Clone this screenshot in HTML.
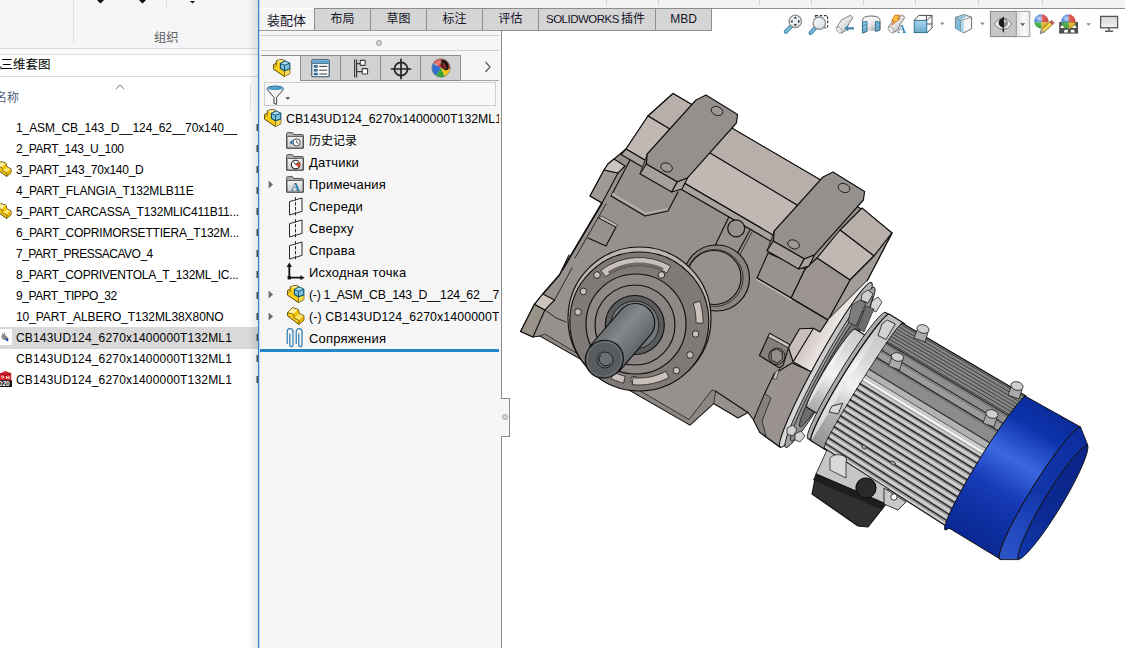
<!DOCTYPE html>
<html><head><meta charset="utf-8"><title>SOLIDWORKS</title>
<style>
html,body{margin:0;padding:0}
body{width:1125px;height:648px;position:relative;overflow:hidden;background:#fff;font-family:"Liberation Sans",sans-serif;color:#000}
.abs{position:absolute}
.cj{display:block;position:relative;overflow:visible}
.cj .ct{position:absolute;left:0;top:0;white-space:nowrap;font-family:"Liberation Sans","Noto Sans CJK SC",sans-serif}
/* explorer */
#exp{left:0;top:0;width:258px;height:648px;background:#fff;overflow:hidden}
#rib{left:0;top:0;width:258px;height:48px;background:#f5f6f7;border-bottom:1px solid #dadbdc}
#ribgap{left:0;top:49px;width:258px;height:5px;background:#f9f9f9}
#addr{left:0;top:54px;width:258px;height:21px;background:#fff;border-top:1px solid #d9d9d9;border-bottom:1px solid #d9d9d9}
.vsep{width:1px;background:#e2e3e4}
.row{left:16px;height:21px;line-height:21px;font-size:12px;white-space:nowrap;color:#000}
.sel{left:0;top:327px;width:258px;height:22px;background:#d9d9d9}
/* solidworks */
#sw{left:258px;top:0;width:867px;height:648px;background:#fff}
.tab{top:8px;height:22px;border:1px solid #8e8e8e;background:#d5d5d5;box-sizing:border-box;height:23px;font-size:12px;line-height:21px;text-align:center;color:#141428;white-space:nowrap}
.fmtab{top:55px;width:41px;height:26px;box-sizing:border-box;border:1px solid #8e8e8e;background:#d2d2d2}
.trow{height:22px;line-height:22px;font-size:13px;white-space:nowrap;color:#000}
</style></head><body>

<!-- ================= Explorer (left) ================= -->
<div id="exp" class="abs">
  <div id="rib" class="abs"></div>
  <div id="ribgap" class="abs"></div>
  <div id="addr" class="abs"></div>
  <div class="abs vsep" style="left:73px;top:0;height:45px"></div>
  <div class="abs vsep" style="left:166px;top:0;height:10px"></div>
  <svg class="abs" style="left:0;top:0" width="258" height="12">
    <path d="M97 0h7l-3.5 3.5zM139 0h7l-3.5 3.500zM190 1h5l-2.500 2.500z" fill="#111"/>
  </svg>
  <div class="abs" style="left:154.0px;top:30.6px"><span class="cj" style="width:24.6px;height:14.3px;"><span class="ct" style="font-size:12.3px;line-height:14.3px;color:#5e5e5e">组织</span></span></div>
  <div class="abs" style="left:-1px;top:56px;font-size:12.5px;line-height:17px;color:#000">,</div><div class="abs" style="left:0.5px;top:57.6px"><span class="cj" style="width:50.0px;height:14.5px;"><span class="ct" style="font-size:12.5px;line-height:14.5px;color:#000">三维套图</span></span></div>
  <svg class="abs" style="left:115px;top:83px" width="10" height="7"><path d="M1 6l4-4.200L9 6" fill="none" stroke="#7a7a7a" stroke-width="1"/></svg>
  <div class="abs" style="left:-5.0px;top:91.6px"><span class="cj" style="width:24.0px;height:13.9px;"><span class="ct" style="font-size:12.0px;line-height:13.9px;color:#4c607a">名称</span></span></div>
  <div class="abs vsep" style="left:250px;top:84px;height:27px;background:#e5e5e5"></div>
  <div class="abs sel"></div>
  <svg class="abs" style="left:-4px;top:161px" width="16" height="16" viewBox="0 0 18 18"><use href="#icPart2"/></svg>
  <svg class="abs" style="left:-4px;top:203px" width="16" height="16" viewBox="0 0 18 18"><use href="#icPart2"/></svg>
  <svg width="0" height="0" style="position:absolute"><defs><symbol id="icPart2" viewBox="0 0 18 18">
    <path d="M.6 5.600L5.600.6l5.600 1.900 1.300 4.400 4.400 1.900v4.300l-5 4.400L.6 8.800z" fill="#fdd017" stroke="#5a4300" stroke-width="1.100" stroke-linejoin="round"/>
    <path d="M1 5.600L5.700 1l5.100 1.700-4.500 4.500z" fill="#fff0a0"/>
    <path d="M6.300 7.200l4.500-4.500L12.100 7l-4.700 4.200z" fill="#f2c200"/>
    <path d="M7.400 11.200L12.100 7l4.400 2-4.600 4.200z" fill="#ffe870"/>
    <path d="M11.900 13.200L16.500 9v3.900l-4.600 4.200z" fill="#e5b400"/>
    <path d="M1 5.700l5.300 1.500 1.100 4 4.500 2V17" fill="none" stroke="#5a4300" stroke-width=".8"/>
  </symbol></defs></svg>
  <div class="abs" style="left:0;top:329px;width:12px;height:16px;background:#fff"></div>
  <svg class="abs" style="left:0;top:329px" width="12" height="16"><path d="M1 8l2-3 3 1.400 2.600 3.200-2.400 1.800L3 10.600z" fill="#8b8b8b"/><path d="M2.400 4.400l.8 2M4.600 3.400l.2 2.400" stroke="#555" stroke-width=".7"/><path d="M6.400 9l2.200 1.400-.8 2-2.200-1.600z" fill="#1a3cc0"/></svg>
  <svg class="abs" style="left:0;top:370px" width="13" height="18"><path d="M0 3.600L5.400 1l5.800 2.200v7.200H0z" fill="#d4202a"/><path d="M0 3.600l5.400 1.600 5.800-2" fill="none" stroke="#8a0d14" stroke-width=".8"/><path d="M1.200 6.600q1.600-1.400 2.600 0t-2.200 1.600M6.600 6v2.600l1.200-1.400 1.200 1.400V6" fill="none" stroke="#fff" stroke-width=".9"/><rect x="0" y="10.200" width="12" height="6.800" fill="#111"/><text x="-1.200" y="16.200" font-family="Liberation Sans" font-weight="bold" font-size="6.800" fill="#fff" letter-spacing="-.2">020</text></svg>
  <!-- next column slivers -->
  <svg class="abs" style="left:254px;top:117px" width="4" height="270"><g fill="#555"><rect x="2.5" y="7" width="1.5" height="7"/><rect x="2.5" y="28" width="1.5" height="7"/><rect x="2.5" y="49" width="1.5" height="7"/><rect x="2.5" y="70" width="1.5" height="7"/><rect x="2.5" y="91" width="1.5" height="7"/><rect x="2.5" y="112" width="1.5" height="7"/><rect x="2.5" y="133" width="1.5" height="7"/><rect x="2.5" y="154" width="1.5" height="7"/><rect x="2.5" y="175" width="1.5" height="7"/><rect x="2.5" y="196" width="1.5" height="7"/><rect x="2.5" y="217" width="1.5" height="7"/><rect x="2.5" y="238" width="1.5" height="7"/><rect x="2.5" y="259" width="1.5" height="7"/></g></svg>

  <div class="abs row" style="top:118px;letter-spacing:-0.100px">1_ASM_CB_143_D__124_62__70x140__</div>
  <div class="abs row" style="top:139px;letter-spacing:-0.337px">2_PART_143_U_100</div>
  <div class="abs row" style="top:160px;letter-spacing:-0.254px">3_PART_143_70x140_D</div>
  <div class="abs row" style="top:181px;letter-spacing:-0.158px">4_PART_FLANGIA_T132MLB11E</div>
  <div class="abs row" style="top:202px;letter-spacing:-0.189px">5_PART_CARCASSA_T132MLIC411B11...</div>
  <div class="abs row" style="top:223px;letter-spacing:-0.207px">6_PART_COPRIMORSETTIERA_T132M...</div>
  <div class="abs row" style="top:244px;letter-spacing:-0.488px">7_PART_PRESSACAVO_4</div>
  <div class="abs row" style="top:265px;letter-spacing:-0.254px">8_PART_COPRIVENTOLA_T_132ML_IC...</div>
  <div class="abs row" style="top:286px;letter-spacing:-0.417px">9_PART_TIPPO_32</div>
  <div class="abs row" style="top:307px;letter-spacing:-0.074px">10_PART_ALBERO_T132ML38X80NO</div>
  <div class="abs row" style="top:328px;letter-spacing:0.172px">CB143UD124_6270x1400000T132ML1</div>
  <div class="abs row" style="top:349px;letter-spacing:0.172px">CB143UD124_6270x1400000T132ML1</div>
  <div class="abs row" style="top:370px;letter-spacing:0.172px">CB143UD124_6270x1400000T132ML1</div>
</div>

<!-- ================= SolidWorks ================= -->
<div id="sw" class="abs">
  <!-- top strip of command manager -->
  <div class="abs" style="left:0;top:0;width:867px;height:8px;background:#f4f4f4"></div>
  <div class="abs" style="left:57px;top:8px;width:810px;height:1px;background:#8e8e8e"></div>
  <div class="abs" style="left:348px;top:0;width:1px;height:5px;background:#cfcfcf"></div>
  <div class="abs" style="left:400px;top:0;width:1px;height:5px;background:#cfcfcf"></div>
  <div class="abs" style="left:501px;top:0;width:1px;height:5px;background:#cfcfcf"></div>
  <div class="abs" style="left:553px;top:0;width:1px;height:5px;background:#cfcfcf"></div>
  <div class="abs" style="left:605px;top:0;width:1px;height:5px;background:#cfcfcf"></div>
  <div class="abs" style="left:657px;top:0;width:1px;height:5px;background:#cfcfcf"></div>
  <div class="abs" style="left:720px;top:0;width:1px;height:5px;background:#cfcfcf"></div>
  <div class="abs" style="left:784px;top:0;width:1px;height:5px;background:#cfcfcf"></div>
  <!-- tabs -->
  <div class="abs" style="left:1px;top:9px;width:56px;height:22px;background:#f4f4f4"></div><div class="abs" style="left:9.0px;top:12.6px"><span class="cj" style="width:39.0px;height:15.1px;"><span class="ct" style="font-size:13.0px;line-height:15.1px;color:#141428">装配体</span></span></div>
  <div class="abs tab" style="left:56px;width:57px"></div><div class="abs" style="left:72.5px;top:13.1px"><span class="cj" style="width:24.0px;height:13.9px;"><span class="ct" style="font-size:12.0px;line-height:13.9px;color:#141428">布局</span></span></div>
  <div class="abs tab" style="left:112px;width:57px"></div><div class="abs" style="left:128.5px;top:13.1px"><span class="cj" style="width:24.0px;height:13.9px;"><span class="ct" style="font-size:12.0px;line-height:13.9px;color:#141428">草图</span></span></div>
  <div class="abs tab" style="left:168px;width:57px"></div><div class="abs" style="left:184.5px;top:13.1px"><span class="cj" style="width:24.0px;height:13.9px;"><span class="ct" style="font-size:12.0px;line-height:13.9px;color:#141428">标注</span></span></div>
  <div class="abs tab" style="left:224px;width:57px"></div><div class="abs" style="left:240.5px;top:13.1px"><span class="cj" style="width:24.0px;height:13.9px;"><span class="ct" style="font-size:12.0px;line-height:13.9px;color:#141428">评估</span></span></div>
  <div class="abs tab" style="left:280px;width:118px;text-align:left;padding-left:7px;font-size:11.5px;letter-spacing:-0.5px">SOLIDWORKS </div><div class="abs" style="left:363.0px;top:13.1px"><span class="cj" style="width:24.0px;height:13.9px;"><span class="ct" style="font-size:12.0px;line-height:13.9px;color:#141428">插件</span></span></div>
  <div class="abs tab" style="left:397px;width:57px">MBD</div>
  <!-- feature manager panel -->
  <div class="abs" id="fm" style="left:1px;top:31px;width:242px;height:617px;background:#f6f6f6"></div>
  <div class="abs" style="left:1px;top:30px;width:243px;height:1px;background:#9a9a9a"></div>
  <div class="abs" style="left:243px;top:30px;width:1px;height:618px;background:#8a8a8a"></div>
  <div class="abs" style="left:3px;top:35px;width:238px;height:1px;background:#d0d0d0"></div>
  <div class="abs" style="left:3px;top:50px;width:238px;height:1px;background:#d0d0d0"></div>
  <div class="abs" style="left:118px;top:40px;width:6px;height:6px;border-radius:50%;background:#d4d4d4;border:1px solid #a0a0a0;box-sizing:border-box"></div>
  <!-- fm tabs -->
  <div class="abs" style="left:42px;top:80px;width:199px;height:1px;background:#a8a8a8"></div>
  <div class="abs" style="left:3px;top:55px;width:40px;height:1px;background:#8e8e8e"></div>
  <div class="abs fmtab" style="left:42px"></div>
  <div class="abs fmtab" style="left:82px"></div>
  <div class="abs fmtab" style="left:122px"></div>
  <div class="abs fmtab" style="left:162px"></div>
  <svg class="abs" style="left:226px;top:61px" width="8" height="12"><path d="M1.500 1l4.500 5-4.500 5" fill="none" stroke="#666" stroke-width="1.4"/></svg>
  <!-- filter box -->
  <div class="abs" style="left:6px;top:82px;width:232px;height:24px;box-sizing:border-box;border:1px solid #cfcfcf;background:#f8f8f8"></div>
  <!-- rollback bar -->
  <div class="abs" style="left:2px;top:349px;width:239px;height:3px;background:#2586c8"></div>
  <!-- splitter handle -->
  <div class="abs" style="left:243px;top:398px;width:9px;height:39px;box-sizing:border-box;border:1px solid #8a8a8a;border-left:none;background:#f6f6f6"></div>
  <div class="abs" style="left:244px;top:414px;width:6px;height:6px;border-radius:50%;background:#d4d4d4;border:1px solid #aaa;box-sizing:border-box"></div>
  <svg width="0" height="0" style="position:absolute"><defs>
  <linearGradient id="gFold" x1="0" y1="0" x2="0" y2="1"><stop offset="0" stop-color="#f4f4f4"/><stop offset="1" stop-color="#c9c9c9"/></linearGradient>
  <symbol id="icPart" viewBox="0 0 18 18">
    <path d="M.6 5.600L5.600.6l5.600 1.900 1.300 4.400 4.400 1.900v4.300l-5 4.400L.6 8.800z" fill="#fdd017" stroke="#5a4300" stroke-width="1" stroke-linejoin="round"/>
    <path d="M1 5.600L5.700 1l5.100 1.700-4.500 4.500z" fill="#fff0a0"/>
    <path d="M6.300 7.200l4.500-4.500L12.100 7l-4.700 4.200z" fill="#f2c200"/>
    <path d="M7.400 11.200L12.100 7l4.400 2-4.600 4.200z" fill="#ffe870"/>
    <path d="M11.900 13.200L16.500 9v3.900l-4.600 4.200z" fill="#e5b400"/>
    <path d="M1 5.700l5.300 1.500 1.100 4 4.500 2V17" fill="none" stroke="#5a4300" stroke-width=".7"/>
  </symbol>
  <symbol id="icAsm" viewBox="0 0 18 18">
    <path d="M.4 5.600l2.700-1.100.4-2.800L8.200.4l3.100.9 5.500 8.600v4.700l-5.500 2.900L.4 10z" fill="#fdd017" stroke="#5a4300" stroke-width="1" stroke-linejoin="round"/>
    <path d="M3.700 1.900L8.200.7l2.800.8-3.600 1.900z" fill="#fff0a0"/>
    <path d="M11.500 11.900l5.100-1.800v4.400l-5.100 2.700z" fill="#f5dc55"/>
    <path d="M11.400 11.800v5.500" stroke="#5a4300" stroke-width=".7"/>
    <path d="M.6 5.700l2.500-1 .4 2-2.300.8" fill="#ffe35a" stroke="#5a4300" stroke-width=".6"/>
    <path d="M7.400 4.600l4.700-2.500 4.700 2.100v5.700l-5.300 1.800-4.100-2.200z" fill="#7ec0e0" stroke="#0f4c6e" stroke-width="1.100" stroke-linejoin="round"/>
    <path d="M7.700 4.700l4.400-2.300 4.300 1.900-4.900 1.900z" fill="#a6dcf2"/>
    <path d="M11.500 6.200v5.400M7.500 4.700l4 1.500 5.200-1.900" fill="none" stroke="#0f4c6e" stroke-width=".9"/>
  </symbol>
  <symbol id="icFolder" viewBox="0 0 18 17">
    <path d="M.6 16.200V1.600q0-.9.9-.9h4.600q.7 0 1 .6l.7 1.300h8.600q1 0 1 1v12.600z" fill="#b9b9b9" stroke="#4a4a4a" stroke-width="1" stroke-linejoin="round"/>
    <path d="M1 16V5.200q0-.8.8-.8h14.400q.8 0 .8.8V16z" fill="url(#gFold)" stroke="#4a4a4a" stroke-width=".9"/>
  </symbol>
  <symbol id="icPlane" viewBox="0 0 18 22">
    <path d="M3.500 6.600L16 3v13.400L3.500 20z" fill="none" stroke="#2b2b2b" stroke-width="1"/>
    <path d="M9.500 2.200v19" stroke="#2b2b2b" stroke-width="1" stroke-dasharray="3.4 1.5"/>
  </symbol>
</defs></svg>
<!-- rows -->
<svg class="abs" style="left:6px;top:109px" width="18" height="18"><use href="#icAsm"/></svg>
<div class="abs trow" style="left:28px;top:108px;width:213px;overflow:hidden;font-size:12.3px">CB143UD124_6270x1400000T132ML1</div>

<svg class="abs" style="left:28px;top:132px" width="18" height="17"><use href="#icFolder"/>
  <circle cx="10.6" cy="10.4" r="3.6" fill="#fff" stroke="#333" stroke-width=".9"/><path d="M10.600 8.400v2.200l1.800.8" fill="none" stroke="#333" stroke-width=".8"/>
  <path d="M3 9.600l2.200 3.200 2.600-2.600-1.600-.1q.4-1.600 2-2.400-2.600-.2-3.700 2.200z" fill="#2a78ad"/></svg>
<div class="abs" style="left:51.0px;top:134.600px"><span class="cj" style="width:48.0px;height:13.9px;"><span class="ct" style="font-size:12.0px;line-height:13.9px;color:#000">历史记录</span></span></div>

<svg class="abs" style="left:28px;top:154px" width="18" height="17"><use href="#icFolder"/>
  <circle cx="9.6" cy="10.6" r="4.3" fill="#fff" stroke="#222" stroke-width="1.1"/>
  <path d="M9.600 10.600L13 8.200a4.300 4.300 0 0 1-.4 5.400z" fill="#e2431e"/><path d="M9.600 10.600L7.400 7.600M9.600 10.600l2.600-2.400" stroke="#222" stroke-width=".9"/></svg>
<div class="abs trow" style="left:51px;top:152px;letter-spacing:0.2px">Датчики</div>

<svg class="abs" style="left:10px;top:180px" width="6" height="9"><path d="M.6.6L5 4.400.6 8.400z" fill="#6a6a6a"/></svg>
<svg class="abs" style="left:28px;top:176px" width="18" height="17"><use href="#icFolder"/>
  <text x="9.2" y="15" text-anchor="middle" font-family="Liberation Serif" font-weight="bold" font-size="12.5" fill="#2a78ad">A</text></svg>
<div class="abs trow" style="left:51px;top:174px;letter-spacing:0.2px">Примечания</div>

<svg class="abs" style="left:27.5px;top:195px" width="18" height="22"><use href="#icPlane"/></svg>
<div class="abs trow" style="left:51px;top:196px;letter-spacing:0.2px">Спереди</div>
<svg class="abs" style="left:27.5px;top:217px" width="18" height="22"><use href="#icPlane"/></svg>
<div class="abs trow" style="left:51px;top:218px;letter-spacing:0.2px">Сверху</div>
<svg class="abs" style="left:27.5px;top:239px" width="18" height="22"><use href="#icPlane"/></svg>
<div class="abs trow" style="left:51px;top:240px;letter-spacing:0.2px">Справа</div>

<svg class="abs" style="left:28px;top:262px" width="20" height="18"><path d="M3.300 16V3.400M3 15.700h13" stroke="#111" stroke-width="1.8" fill="none"/><path d="M.6 5L3.300.6 6 5zM14.400 13.200l4.200 2.500-4.200 2.500z" fill="#111"/><rect x="1.6" y="14" width="3.4" height="3.4" fill="#111"/></svg>
<div class="abs trow" style="left:51px;top:262px;letter-spacing:0.2px">Исходная точка</div>

<svg class="abs" style="left:10px;top:290px" width="6" height="9"><path d="M.6.6L5 4.400.6 8.400z" fill="#6a6a6a"/></svg>
<svg class="abs" style="left:29px;top:285px" width="18" height="18"><use href="#icAsm"/></svg>
<div class="abs trow" style="left:51px;top:284px;width:190px;overflow:hidden;font-size:12.3px;letter-spacing:-0.28px">(-) 1_ASM_CB_143_D__124_62__70x140__</div>

<svg class="abs" style="left:10px;top:312px" width="6" height="9"><path d="M.6.6L5 4.400.6 8.400z" fill="#6a6a6a"/></svg>
<svg class="abs" style="left:29px;top:307px" width="18" height="18"><use href="#icPart"/></svg>
<div class="abs trow" style="left:51px;top:306px;width:190px;overflow:hidden;font-size:12.3px;letter-spacing:0.12px">(-) CB143UD124_6270x1400000T132ML1</div>

<svg class="abs" style="left:28px;top:327px" width="18" height="22"><g fill="none" stroke="#2a78ad" stroke-width="1.2"><path d="M1.200 17V4.600a2.900 2.900 0 0 1 5.800 0V18a1.600 1.600 0 0 1-3.200 0V6.400"/><path d="M10.200 17V4.600a2.900 2.900 0 0 1 5.800 0V18a1.600 1.600 0 0 1-3.200 0V6.400"/></g></svg>
<div class="abs trow" style="left:51px;top:328px;letter-spacing:0.2px">Сопряжения</div>

<!-- FM tab icons -->
<svg class="abs" style="left:15px;top:59px" width="18" height="18"><use href="#icAsm"/></svg>
<svg class="abs" style="left:53px;top:59px" width="20" height="19"><rect x=".8" y=".8" width="17.4" height="17" rx="1.4" fill="#fff" stroke="#2b4a66" stroke-width="1.1"/><rect x="1.3" y="1.3" width="16.4" height="3" fill="#5ea6cf"/><path d="M1.300 4.600h16.400" stroke="#2b4a66" stroke-width=".8"/><g fill="#2a78ad" stroke="#1d4d70" stroke-width=".5"><rect x="3" y="6.4" width="3.6" height="2"/><rect x="3" y="10.2" width="3.6" height="2"/><rect x="3" y="14" width="3.6" height="2"/></g><path d="M8.200 7.400h8M8.200 11.200h8M8.200 15h8" stroke="#333" stroke-width="1"/></svg>
<svg class="abs" style="left:95px;top:59px" width="16" height="19"><g fill="none" stroke="#3a3a3a" stroke-width="1.2"><path d="M1.600.6v17.800M3.600.6v17.800M3.600 4.600h4M3.600 12.600h5.600"/></g><rect x="7.2" y="1.4" width="5" height="5" rx=".8" fill="#fff" stroke="#3a3a3a" stroke-width="1.1"/><rect x="9.2" y="9.6" width="5.4" height="5.4" rx=".8" fill="#fff" stroke="#3a3a3a" stroke-width="1.1"/></svg>
<svg class="abs" style="left:132px;top:58px" width="22" height="22"><circle cx="11" cy="11" r="6.6" fill="none" stroke="#222" stroke-width="1.7"/><path d="M11 .8v20.400M.8 11h20.400" stroke="#222" stroke-width="1.7"/></svg>
<svg class="abs" style="left:172px;top:57px" width="22" height="22"><defs><clipPath id="cpBall"><circle cx="11" cy="11" r="9.2"/></clipPath></defs><g clip-path="url(#cpBall)"><rect width="22" height="22" fill="#e8e8e8"/><path d="M11 11L0 4V0h11z" fill="#d9322a"/><path d="M11 11L0 4v18h4z" fill="#2f6fd0"/><path d="M11 11L4 22h12z" fill="#3aa533"/><path d="M11 11l5 11h6V12z" fill="#f0c419"/><path d="M11 11l11 1V0H11z" fill="#d9322a"/><ellipse cx="14.6" cy="8" rx="3.6" ry="5.6" transform="rotate(-28 14.6 8)" fill="#161616"/><ellipse cx="14.2" cy="8.8" rx="1.8" ry="3.6" transform="rotate(-28 14.2 8.8)" fill="#7a2c26"/></g><circle cx="11" cy="11" r="9.2" fill="none" stroke="#777" stroke-width=".7"/><ellipse cx="8" cy="6" rx="4" ry="2.4" transform="rotate(-30 8 6)" fill="#fff" opacity=".35"/></svg>
<!-- filter funnel -->
<svg class="abs" style="left:8px;top:85px" width="26" height="20"><ellipse cx="9.2" cy="3.6" rx="8.2" ry="2.6" fill="#8ec9e6" stroke="#1d5f85" stroke-width="1"/><path d="M1.200 4.600L8 12.400v6l2.600 1v-7l6.800-7.800" fill="#f2f2f2" stroke="#444" stroke-width="1" stroke-linejoin="round"/><ellipse cx="9.2" cy="3.2" rx="7.2" ry="1.7" fill="#4d9dc8"/><path d="M19.400 12.200h4.800l-2.400 2.600z" fill="#444"/></svg>

  <svg class="abs" style="left:522px;top:9px" width="345" height="31" viewBox="780 9 345 31">
<defs>
  <linearGradient id="tLens" x1="0" y1="0" x2="1" y2="1"><stop offset="0" stop-color="#fafcfd"/><stop offset="1" stop-color="#d4dde2"/></linearGradient>
  <linearGradient id="tTube" x1="0" y1="0" x2="1" y2="1"><stop offset="0" stop-color="#fdfdfd"/><stop offset=".5" stop-color="#e2e2e2"/><stop offset="1" stop-color="#9c9c9c"/></linearGradient>
  <linearGradient id="tBlueV" x1="0" y1="0" x2="0" y2="1"><stop offset="0" stop-color="#a9d6ec"/><stop offset="1" stop-color="#6aa9cb"/></linearGradient>
  <linearGradient id="tDrop" x1="0" y1="0" x2="1" y2="0"><stop offset="0" stop-color="#e2e2e2"/><stop offset=".6" stop-color="#fbfbfb"/><stop offset="1" stop-color="#e6e6e6"/></linearGradient>
  <linearGradient id="tMon" x1="0" y1="0" x2="0" y2="1"><stop offset="0" stop-color="#d6d6d6"/><stop offset="1" stop-color="#f1f1f1"/></linearGradient>
  <radialGradient id="tShine" cx=".35" cy=".3" r=".7"><stop offset="0" stop-color="#fff" stop-opacity=".75"/><stop offset=".35" stop-color="#fff" stop-opacity=".1"/><stop offset="1" stop-color="#000" stop-opacity=".12"/></radialGradient>
  <clipPath id="cpB1"><circle cx="1041.4" cy="21.5" r="7.2"/></clipPath>
  <clipPath id="cpB2"><circle cx="1068.4" cy="21.5" r="7.2"/></clipPath>
</defs>
<!-- 1 zoom to fit -->
<path d="M791.400 26.100l-5.600 5.700" stroke="#3f86ad" stroke-width="4.2" stroke-linecap="round"/>
<path d="M791.200 26.300l-5.200 5.300" stroke="#7db9d8" stroke-width="2.4" stroke-linecap="round"/>
<circle cx="795.3" cy="21.4" r="6.2" fill="url(#tLens)" stroke="#8f8f8f" stroke-width="1.3"/>
<path d="M795.300 16.600l1.700 2h-3.400zM795.300 26.200l1.700-2h-3.400zM790.500 21.400l2-1.700v3.400zM800.100 21.400l-2-1.700v3.400z" fill="#222"/>
<!-- 2 zoom area -->
<rect x="815.4" y="15.6" width="12.2" height="12.2" fill="none" stroke="#333" stroke-width="1.1" stroke-dasharray="2.6 1.7"/>
<path d="M815.600 27.600l-5 5.300" stroke="#3f86ad" stroke-width="4.2" stroke-linecap="round"/>
<path d="M815.400 27.800l-4.600 4.900" stroke="#7db9d8" stroke-width="2.4" stroke-linecap="round"/>
<circle cx="819.3" cy="23.2" r="6.2" fill="url(#tLens)" stroke="#8f8f8f" stroke-width="1.3"/>
<!-- 3 previous view -->
<path d="M836.600 27.200l4.600 6 5-3 1.200-4 5.600-8.600-2.400-2.400-9 4.600z" fill="url(#tTube)" stroke="#777" stroke-width=".9" stroke-linejoin="round"/>
<ellipse cx="839.2" cy="30" rx="2.2" ry="3.6" transform="rotate(-38 839.2 30)" fill="#eee" stroke="#888" stroke-width=".7"/>
<path d="M844.400 28.300l3.800-3.200v2.100h5.800v2.300h-5.800v2.100z" fill="#3f86ad"/>
<!-- 4 section view -->
<path d="M862.400 20.600q0-4.600 8.800-4.600t8.800 4.400v9.400l-4.200 1.400v-4.600h-8.600l-.2 4.800-4.600 1.600z" fill="#f4f4f4" stroke="#6a6a6a" stroke-width="1" stroke-linejoin="round"/>
<path d="M866.800 22.400q4.400-2 8.800-.2v8.600h-8.800z" fill="url(#tTube)"/>
<path d="M862.600 22.200l4.400-.8v10l-4.400 1.600z" fill="#8fc6e3" stroke="#2e6f94" stroke-width=".9"/>
<path d="M875.600 21.200l4.200 1v8l-4.200 1.200z" fill="#8fc6e3" stroke="#2e6f94" stroke-width=".9"/>
<path d="M863 27l3.600-3.600M863 30.600l3.800-3.800M863.600 32.800l3-3M876 25.400l3.400-3M876 28.800l3.600-3.400M876.400 31l3-2.800" stroke="#2e6f94" stroke-width=".8"/>
<!-- 5 dynamic annotation -->
<path d="M888.400 27l4.600 6 5-3 1.200-4 5.600-8.600-2.400-2.400-9 4.600z" fill="url(#tTube)" stroke="#777" stroke-width=".9" stroke-linejoin="round"/>
<ellipse cx="891" cy="29.8" rx="2.2" ry="3.6" transform="rotate(-38 891 29.8)" fill="#eee" stroke="#888" stroke-width=".7"/>
<path d="M895 15.200h4.800l-2.400 3.200h2.800l-8.400 6.600 2.600-4.200h-2.800z" fill="#f7c63a" stroke="#d0641c" stroke-width=".9" stroke-linejoin="round"/>
<text x="901.6" y="33.2" text-anchor="middle" font-family="Liberation Serif" font-size="12" fill="#3f86ad" font-weight="bold">A</text>
<!-- 6 view orientation -->
<path d="M918.800 15.400h13.200v12.600l-5 4.600M918.800 15.400l-4.600 5M932 15.400l-5 5M926.400 15.400v5M932 24h-5" fill="none" stroke="#4a4a4a" stroke-width="1"/>
<rect x="914.3" y="20.4" width="12.4" height="12.2" fill="url(#tBlueV)" stroke="#2e6f94" stroke-width="1"/>
<path d="M940 22.600h4.600l-2.300 2.600z" fill="#8a8a8a"/>
<!-- 7 display style -->
<path d="M955.400 17.400l8.600-2.800 7.600 2.600v11.600l-8 4-8.200-4.600z" fill="#f6f6f6" stroke="#6e6e6e" stroke-width="1" stroke-linejoin="round"/>
<path d="M955.800 17.800l4.600 2.600v11.400l-4.600-2.600z" fill="#7fbddc"/>
<path d="M960.400 20.400l3.400.6v11.600l-3.400-1z" fill="#a9d6ec"/>
<path d="M955.900 17.500l8.100-2.500 3 1-6.400 4.200z" fill="#8fc6e3"/>
<path d="M960.400 20.600v11M955.600 17.600l4.800 3 11-3.200" fill="none" stroke="#6e6e6e" stroke-width=".7"/>
<path d="M980 22.600h4.800l-2.400 2.600z" fill="#8a8a8a"/>
<!-- 8 hide/show (pressed) -->
<rect x="990.4" y="11.4" width="26" height="25.2" fill="#c6c6c6" stroke="#858585" stroke-width="1"/>
<rect x="1016.4" y="11.4" width="13.4" height="25.2" fill="url(#tDrop)" stroke="#a0a0a0" stroke-width="1"/>
<path d="M994.200 24q9-12.400 17.800 0-8.800 11.400-17.800 0z" fill="#ececec" stroke="#7a7a7a" stroke-width="1"/>
<circle cx="1003.3" cy="22.8" r="4.6" fill="#8a8a8a"/>
<path d="M1003.300 18.200a4.600 4.600 0 0 0 0 9.200z" fill="#1a1a1a"/>
<circle cx="1004.8" cy="21.4" r="1.3" fill="#cfcfcf"/>
<path d="M1003.300 16.800v15.400" stroke="#1a1a1a" stroke-width="1.2"/>
<path d="M1020.200 23.200h5l-2.500 2.700z" fill="#555"/>
<!-- 9 edit appearance -->
<g clip-path="url(#cpB1)"><rect x="1034" y="14" width="7.6" height="8.4" fill="#4a86d8"/><rect x="1041.6" y="14" width="8" height="8.4" fill="#de4f49"/><rect x="1034" y="22.4" width="7.6" height="8" fill="#43b443"/><rect x="1041.6" y="22.4" width="8" height="8" fill="#efc02f"/><circle cx="1041.4" cy="21.5" r="7.2" fill="url(#tShine)"/></g>
<path d="M1040.200 33.400l1.200-3.800 8.600-7.800 2.600 2.600-8.600 7.800z" fill="#f7d64a" stroke="#6a5a20" stroke-width=".8" stroke-linejoin="round"/>
<path d="M1050 21.800l1.600-1.400 2.600 2.600-1.600 1.400z" fill="#e0625c" stroke="#6a3030" stroke-width=".6"/>
<path d="M1040.200 33.400l1.200-3.800 2.600 2.600z" fill="#d8d8d8" stroke="#555" stroke-width=".6"/>
<!-- 10 apply scene -->
<rect x="1059.2" y="22" width="18.8" height="11.6" fill="#4e4e4e"/>
<path d="M1061.200 25.600h3.600l-.6 2.400h-3.800zM1072 25.600h3.600l.8 2.400h-3.800zM1064.600 29.800h3.400l-.2 2.800h-4zM1070.600 29.800h3.400l.8 2.800h-4z" fill="#fff"/>
<g clip-path="url(#cpB2)"><rect x="1061" y="14" width="7.6" height="8.4" fill="#4a86d8"/><rect x="1068.6" y="14" width="8" height="8.4" fill="#de4f49"/><rect x="1061" y="22.4" width="7.6" height="8" fill="#43b443"/><rect x="1068.6" y="22.4" width="8" height="8" fill="#efc02f"/><circle cx="1068.4" cy="21.5" r="7.2" fill="url(#tShine)"/></g>
<path d="M1086.200 23.200h4.600l-2.300 2.600z" fill="#8a8a8a"/>
<!-- 11 view settings -->
<rect x="1100.6" y="16.4" width="17" height="11.4" fill="url(#tMon)" stroke="#555" stroke-width="1.3"/>
<path d="M1109 28v2.600" stroke="#555" stroke-width="1.6"/><path d="M1105 31.200h8" stroke="#555" stroke-width="1.5"/>
</svg>

</div>
<svg class="abs" style="left:0;top:0" width="1125" height="648" viewBox="0 0 1125 648">
<defs>
<linearGradient id="gShaft" gradientUnits="userSpaceOnUse" x1="606" y1="327" x2="635" y2="352">
 <stop offset="0" stop-color="#6c7073"/><stop offset="0.4" stop-color="#83888b"/><stop offset="0.8" stop-color="#6f7376"/><stop offset="1" stop-color="#62666a"/></linearGradient>
<linearGradient id="gBlue" gradientUnits="userSpaceOnUse" x1="1053" y1="411" x2="975" y2="544">
 <stop offset="0" stop-color="#0a2c9c"/><stop offset="0.16" stop-color="#0d33ac"/><stop offset="0.40" stop-color="#3a67e0"/><stop offset="0.62" stop-color="#183cb8"/><stop offset="0.82" stop-color="#0d2fa1"/><stop offset="1" stop-color="#0b2994"/></linearGradient>
<linearGradient id="gBlueCh" gradientUnits="userSpaceOnUse" x1="1084" y1="436" x2="1010" y2="560">
 <stop offset="0" stop-color="#0d2d9e"/><stop offset="0.5" stop-color="#1236aa"/><stop offset="0.8" stop-color="#2349be"/><stop offset="1" stop-color="#2c53c6"/></linearGradient>
<linearGradient id="gBlueEnd" gradientUnits="userSpaceOnUse" x1="1088" y1="445" x2="1018" y2="560">
 <stop offset="0" stop-color="#0a2486"/><stop offset="0.6" stop-color="#0c2a92"/><stop offset="1" stop-color="#1237aa"/></linearGradient>
<linearGradient id="gFin" gradientUnits="userSpaceOnUse" x1="963" y1="359" x2="886" y2="487">
 <stop offset="0" stop-color="#7e7e7e"/><stop offset="0.30" stop-color="#9c9c9c"/><stop offset="0.42" stop-color="#b4b4b4"/><stop offset="0.50" stop-color="#d8d8d8"/><stop offset="0.62" stop-color="#c6c6c6"/><stop offset="1" stop-color="#bdbdbd"/></linearGradient>
<linearGradient id="gSilver" gradientUnits="userSpaceOnUse" x1="880" y1="300" x2="800" y2="440">
 <stop offset="0" stop-color="#b8b8b8"/><stop offset="0.35" stop-color="#d6d6d6"/><stop offset="0.55" stop-color="#f4f4f4"/><stop offset="0.75" stop-color="#b4b4b4"/><stop offset="1" stop-color="#8e8e8e"/></linearGradient>
<linearGradient id="gBand" gradientUnits="userSpaceOnUse" x1="871" y1="283" x2="780" y2="447">
 <stop offset="0" stop-color="#e0e0e0"/><stop offset="0.5" stop-color="#d4d4d4"/><stop offset="0.75" stop-color="#b0b0b0"/><stop offset="1" stop-color="#9a9a9a"/></linearGradient>
<linearGradient id="gAdapt" gradientUnits="userSpaceOnUse" x1="800" y1="340" x2="830" y2="356">
 <stop offset="0" stop-color="#cbc1bc"/><stop offset="0.6" stop-color="#e6dfdb"/><stop offset="1" stop-color="#f6f3f1"/></linearGradient>
</defs>
<polygon points="673.0,93.5 820.0,180.0 861.0,209.0 892.0,233.0 867.0,281.0 828.0,320.0 820.0,332.0 809.0,370.0 790.0,440.0 780.0,447.0 760.0,432.5 753.6,420.0 748.0,412.5 738.0,418.0 713.6,403.5 690.0,425.0 610.0,379.0 584.0,361.0 540.0,336.0 533.0,337.0 520.6,331.4 534.4,304.3 542.8,294.0 559.4,275.0 571.0,255.0 602.0,203.0 590.0,196.0 604.0,170.0 608.0,164.0 614.0,159.0 626.0,149.0 648.0,116.0" fill="#97918e" stroke="#101010" stroke-width="1.15" stroke-linejoin="round" />
<polygon points="673.0,93.5 836.0,189.0 812.0,214.0 648.0,116.0" fill="#b9afaa" stroke="#101010" stroke-width="1.15" stroke-linejoin="round" />
<polygon points="648.0,116.0 812.0,214.0 790.0,245.0 626.0,149.0" fill="#c2b8b3" stroke="#101010" stroke-width="1.15" stroke-linejoin="round" />
<polygon points="626.0,149.0 790.0,245.0 786.0,250.0 621.0,154.5" fill="#a8a19d" stroke="#101010" stroke-width="1.15" stroke-linejoin="round" />
<polygon points="862.0,208.0 892.0,233.0 874.0,256.0 840.0,230.0" fill="#b9afaa" stroke="#101010" stroke-width="1.15" stroke-linejoin="round" />
<polygon points="817.0,258.0 840.0,230.0 874.0,256.0 850.0,280.0" fill="#c2b8b3" stroke="#101010" stroke-width="1.15" stroke-linejoin="round" />
<polygon points="892.0,233.0 874.0,256.0 850.0,280.0 828.0,320.0 867.0,281.0" fill="#a39c98" stroke="#101010" stroke-width="1.15" stroke-linejoin="round" />
<polygon points="791.0,298.0 805.0,269.0 817.0,258.0 850.0,280.0 828.0,320.0" fill="#9b9491" stroke="#101010" stroke-width="1.15" stroke-linejoin="round" />
<polygon points="768.0,253.0 805.0,269.0 791.0,298.0 757.0,278.0" fill="#999390" stroke="#101010" stroke-width="1.15" stroke-linejoin="round" />
<polyline points="757.0,279.5 791.0,299.5" fill="none" stroke="#c8beb9" stroke-width="1.6" stroke-linejoin="round" stroke-linecap="round" />
<polyline points="757.0,278.0 791.0,298.0 828.0,320.0" fill="none" stroke="#101010" stroke-width="1.15" stroke-linejoin="round" stroke-linecap="round" />
<polygon points="604.0,170.0 618.0,173.0 602.0,203.0 590.0,196.0" fill="#a09a96" stroke="#101010" stroke-width="1.15" stroke-linejoin="round" />
<polygon points="608.0,164.0 614.0,159.0 625.0,166.0 618.0,173.0 604.0,170.0" fill="#cdc4be" stroke="#101010" stroke-width="1.15" stroke-linejoin="round" />
<polyline points="630.0,160.0 611.0,196.0 645.0,216.0 668.0,211.0 678.0,192.0" fill="none" stroke="#101010" stroke-width="1.15" stroke-linejoin="round" stroke-linecap="round" />
<polyline points="612.5,194.0 645.5,213.5 667.0,209.0" fill="none" stroke="#bdb3ae" stroke-width="1.5" stroke-linejoin="round" stroke-linecap="round" />
<polyline points="599.0,218.0 616.0,227.0 606.0,246.0 588.0,238.0" fill="none" stroke="#101010" stroke-width="1.15" stroke-linejoin="round" stroke-linecap="round" />
<polygon points="599.0,218.0 601.5,216.0 618.0,225.0 616.0,227.0" fill="#c2b8b3" stroke="#101010" stroke-width="0.6" stroke-linejoin="round" />
<polyline points="602.0,203.0 563.0,269.0" fill="none" stroke="#101010" stroke-width="1.6" stroke-linejoin="round" stroke-linecap="round" />
<polyline points="606.0,204.0 575.0,258.0" fill="none" stroke="#101010" stroke-width="0.8" stroke-linejoin="round" stroke-linecap="round" />
<polygon points="520.6,331.4 534.4,304.3 544.9,309.9 533.0,337.0" fill="#989289" stroke="#101010" stroke-width="1.15" stroke-linejoin="round" />
<polygon points="534.4,304.3 542.8,293.9 554.6,300.0 544.9,309.9" fill="#cdc4be" stroke="#101010" stroke-width="1.15" stroke-linejoin="round" />
<polyline points="542.8,294.0 559.4,275.0 569.0,255.0" fill="none" stroke="#101010" stroke-width="1.15" stroke-linejoin="round" stroke-linecap="round" />
<polyline points="554.6,300.0 572.0,268.0" fill="none" stroke="#101010" stroke-width="0.8" stroke-linejoin="round" stroke-linecap="round" />
<polyline points="544.9,309.9 556.0,318.0 566.0,322.0" fill="none" stroke="#101010" stroke-width="0.8" stroke-linejoin="round" stroke-linecap="round" />
<polygon points="540.0,336.0 584.0,361.0 610.0,379.0 690.0,425.0 713.6,403.5 715.7,391.2 712.0,390.0 689.0,419.5 612.0,374.5 545.0,334.0" fill="#8d8784" stroke="#101010" stroke-width="0.7" stroke-linejoin="round" />
<polyline points="715.7,391.2 748.0,412.5" fill="none" stroke="#101010" stroke-width="1.15" stroke-linejoin="round" stroke-linecap="round" />
<polyline points="728.6,217.6 715.0,245.7" fill="none" stroke="#101010" stroke-width="1.15" stroke-linejoin="round" stroke-linecap="round" />
<polyline points="749.8,230.4 737.0,254.0" fill="none" stroke="#101010" stroke-width="1.15" stroke-linejoin="round" stroke-linecap="round" />
<polyline points="752.0,232.0 739.5,255.5" fill="none" stroke="#101010" stroke-width="0.7" stroke-linejoin="round" stroke-linecap="round" />
<circle cx="736.2" cy="228.3" r="8.5" fill="#97918e" stroke="#101010" stroke-width="1.15" />
<circle cx="716.5" cy="278.0" r="33.0" fill="#8a8582" stroke="#101010" stroke-width="1.15" />
<circle cx="714.0" cy="277.5" r="27.0" fill="#97918e" stroke="#101010" stroke-width="1.15" />
<circle cx="714.6" cy="278.0" r="28.5" fill="none" stroke="#101010" stroke-width="0.7" />
<circle cx="639.5" cy="318.5" r="71.5" fill="#bfb5b0" stroke="#101010" stroke-width="1.15" />
<circle cx="639.3" cy="321.5" r="69.5" fill="#7f7a78" stroke="#101010" stroke-width="1.15" />
<circle cx="636.0" cy="324.0" r="50.0" fill="#8e8986" stroke="#101010" stroke-width="1.15" />
<circle cx="635.0" cy="325.0" r="40.0" fill="#8a8582" stroke="#101010" stroke-width="1.15" />
<circle cx="634.8" cy="325.0" r="29.5" fill="#595b5d" stroke="#101010" stroke-width="1.15" />
<circle cx="597.0" cy="275.0" r="3.3" fill="#c9c0ba" stroke="#101010" stroke-width="0.8" />
<circle cx="661.4" cy="275.0" r="3.3" fill="#c9c0ba" stroke="#101010" stroke-width="0.8" />
<circle cx="583.4" cy="291.4" r="3.3" fill="#c9c0ba" stroke="#101010" stroke-width="0.8" />
<circle cx="578.0" cy="312.0" r="3.3" fill="#c9c0ba" stroke="#101010" stroke-width="0.8" />
<circle cx="695.6" cy="334.0" r="3.3" fill="#c9c0ba" stroke="#101010" stroke-width="0.8" />
<circle cx="690.0" cy="355.0" r="3.3" fill="#c9c0ba" stroke="#101010" stroke-width="0.8" />
<circle cx="676.4" cy="370.6" r="3.3" fill="#c9c0ba" stroke="#101010" stroke-width="0.8" />
<circle cx="634.0" cy="379.6" r="3.3" fill="#c9c0ba" stroke="#101010" stroke-width="0.8" />
<polygon points="600.8,270.3 608.6,265.3 617.0,261.4 625.9,258.9 635.1,257.6 644.4,257.7 653.6,259.2 662.4,262.0 670.8,266.0 666.8,272.9 659.5,269.4 651.7,267.0 643.7,265.7 635.6,265.6 627.6,266.7 619.8,268.9 612.4,272.3 605.6,276.7" fill="#c9c0ba" stroke="#101010" stroke-width="0.7" stroke-linejoin="round" />
<polygon points="608.0,271.4 614.4,267.9 621.2,265.3 628.2,263.5 635.4,262.6 642.7,262.6 649.9,263.5 657.0,265.3 663.7,268.0 662.5,270.7 656.0,268.2 649.4,266.5 642.5,265.6 635.6,265.6 628.8,266.5 622.1,268.1 615.7,270.6 609.6,273.9" fill="#6f6a68" stroke="none" stroke-width="1.15" stroke-linejoin="round" />
<polygon points="699.9,301.2 700.7,303.9 701.4,306.6 701.9,309.3 702.4,312.1 702.7,314.9 702.9,317.7 703.0,320.4 703.0,323.2 696.0,323.0 696.0,320.5 695.9,318.0 695.7,315.5 695.4,313.1 695.0,310.6 694.5,308.2 693.9,305.8 693.2,303.4" fill="#c9c0ba" stroke="#101010" stroke-width="0.7" stroke-linejoin="round" />
<polygon points="669.0,377.5 664.8,379.6 660.4,381.3 655.8,382.7 651.2,383.8 646.5,384.6 641.8,384.9 637.0,385.0 632.3,384.6 633.0,377.7 637.3,378.0 641.5,377.9 645.7,377.6 649.9,377.0 654.0,376.0 658.0,374.7 662.0,373.2 665.8,371.3" fill="#c9c0ba" stroke="#101010" stroke-width="0.7" stroke-linejoin="round" />
<polygon points="623.5,383.1 621.9,382.7 620.3,382.2 618.7,381.7 617.1,381.1 615.5,380.5 614.0,379.9 612.5,379.2 610.9,378.5 614.0,372.2 615.4,372.9 616.7,373.5 618.1,374.0 619.5,374.6 620.9,375.1 622.3,375.5 623.8,375.9 625.2,376.3" fill="#c9c0ba" stroke="#101010" stroke-width="0.7" stroke-linejoin="round" />
<circle cx="634.8" cy="325.0" r="24.0" fill="#74787a" stroke="#101010" stroke-width="0.8" />
<path d="M589.6,346.5 L622.1,308.7 A19.4,19.4 0 0 1 651.3,333.9 L619,371.7 Z" fill="url(#gShaft)" stroke="#101010" stroke-width="1.15" stroke-linejoin="round" />
<ellipse cx="604.3" cy="359.1" rx="19.3" ry="18.6" transform="rotate(-40.0 604.3 359.1)" fill="#585c5e" stroke="#101010" stroke-width="1.15" />
<ellipse cx="604.3" cy="359.1" rx="17.4" ry="16.8" transform="rotate(-40.0 604.3 359.1)" fill="none" stroke="#74787a" stroke-width="0.8" />
<circle cx="605.0" cy="360.0" r="8.0" fill="#6b6f71" stroke="#101010" stroke-width="0.8" />
<path d="M600.6,355.4 A6,6 0 1 0 610.6,363.4 A5,5 0 1 1 600.6,355.4Z" fill="#8d9193" stroke="#101010" stroke-width="0.6" stroke-linejoin="round" />
<polygon points="646.4,164.0 677.3,181.7 671.7,192.0 640.0,173.7" fill="#a69f9b" stroke="#101010" stroke-width="1.15" stroke-linejoin="round" />
<polygon points="677.3,181.7 687.7,177.7 682.0,189.0 671.7,192.0" fill="#aaa39f" stroke="#101010" stroke-width="1.15" stroke-linejoin="round" />
<polygon points="647.2,154.0 646.4,164.0 640.0,173.7" fill="#6e6a68" stroke="#101010" stroke-width="0.7" stroke-linejoin="round" />
<polygon points="696.0,100.0 706.0,95.0 737.6,114.4 736.4,123.0 687.7,177.7 677.3,181.7 646.4,164.0 647.2,154.0" fill="#94908d" stroke="#101010" stroke-width="1.15" stroke-linejoin="round" />
<ellipse cx="717.0" cy="111.0" rx="6.0" ry="4.3" transform="rotate(22.0 717.0 111.0)" fill="#9d9895" stroke="#101010" stroke-width="0.8" />
<ellipse cx="666.6" cy="167.4" rx="6.0" ry="4.3" transform="rotate(22.0 666.6 167.4)" fill="#9d9895" stroke="#101010" stroke-width="0.8" />
<polygon points="773.4,241.0 804.3,258.7 798.7,269.0 767.0,250.7" fill="#a69f9b" stroke="#101010" stroke-width="1.15" stroke-linejoin="round" />
<polygon points="804.3,258.7 814.7,254.7 809.0,266.0 798.7,269.0" fill="#aaa39f" stroke="#101010" stroke-width="1.15" stroke-linejoin="round" />
<polygon points="774.2,231.0 773.4,241.0 767.0,250.7" fill="#6e6a68" stroke="#101010" stroke-width="0.7" stroke-linejoin="round" />
<polygon points="823.0,177.0 833.0,172.0 864.6,191.4 863.4,200.0 814.7,254.7 804.3,258.7 773.4,241.0 774.2,231.0" fill="#94908d" stroke="#101010" stroke-width="1.15" stroke-linejoin="round" />
<ellipse cx="844.0" cy="188.0" rx="6.0" ry="4.3" transform="rotate(22.0 844.0 188.0)" fill="#9d9895" stroke="#101010" stroke-width="0.8" />
<ellipse cx="793.6" cy="244.4" rx="6.0" ry="4.3" transform="rotate(22.0 793.6 244.4)" fill="#9d9895" stroke="#101010" stroke-width="0.8" />
<polygon points="813.5,328.3 820.0,332.0 828.0,320.0 867.0,281.0 876.0,288.0 840.0,344.0 818.0,378.0 806.1,369.0 793.1,361.7" fill="url(#gAdapt)" stroke="none" stroke-width="1.15" stroke-linejoin="round" />
<polyline points="793.1,361.7 806.1,369.0 812.0,372.8" fill="none" stroke="#101010" stroke-width="1.15" stroke-linejoin="round" stroke-linecap="round" />
<polyline points="813.5,328.3 820.0,332.0 828.0,320.0" fill="none" stroke="#101010" stroke-width="1.15" stroke-linejoin="round" stroke-linecap="round" />
<polygon points="799.6,328.8 813.5,328.3 793.1,361.7 788.5,347.8" fill="#c9c0bb" stroke="#101010" stroke-width="1.15" stroke-linejoin="round" />
<polygon points="792.0,363.0 812.0,372.0 790.0,440.0 780.0,447.0 760.0,432.5 753.6,420.0 764.7,393.6 774.0,374.0" fill="#9a9390" stroke="#101010" stroke-width="1.15" stroke-linejoin="round" />
<polygon points="764.7,393.6 753.6,420.0 760.0,432.5 766.0,436.0 762.0,421.0 771.0,398.0" fill="#86807d" stroke="#101010" stroke-width="0.7" stroke-linejoin="round" />
<polygon points="769.5,333.4 789.4,344.5 788.5,347.8 783.0,365.4 779.7,368.1 759.4,355.6" fill="#857f7c" stroke="#101010" stroke-width="1.15" stroke-linejoin="round" />
<polygon points="769.5,333.4 789.4,344.5 788.5,347.8 768.0,336.8" fill="#cdc3be" stroke="#101010" stroke-width="0.8" stroke-linejoin="round" />
<circle cx="776.8" cy="356.3" r="8.2" fill="#7b7673" stroke="#101010" stroke-width="0.8" />
<polygon points="771.0,351.5 776.5,349.0 782.0,352.0 782.5,359.0 777.5,363.0 771.5,360.0" fill="#948e8b" stroke="#101010" stroke-width="0.8" stroke-linejoin="round" />
<polygon points="775.6,371.9 779.3,369.2 776.5,379.0 772.8,379.0" fill="#cdc3be" stroke="#101010" stroke-width="0.6" stroke-linejoin="round" />
<ellipse cx="825.9" cy="364.9" rx="94.0" ry="9.6" transform="rotate(119.0 825.9 364.9)" fill="url(#gBand)" stroke="#101010" stroke-width="1.15" />
<ellipse cx="830.0" cy="367.4" rx="91.5" ry="9.2" transform="rotate(119.0 830.0 367.4)" fill="#a2a2a2" stroke="#101010" stroke-width="0.8" />
<ellipse cx="831.4" cy="368.4" rx="83.0" ry="8.4" transform="rotate(119.0 831.4 368.4)" fill="#8e8e8e" stroke="#101010" stroke-width="0.7" />
<ellipse cx="832.0" cy="369.0" rx="66.0" ry="6.8" transform="rotate(119.0 832.0 369.0)" fill="#6c6c6c" stroke="#101010" stroke-width="0.7" />
<polygon points="787.0,428.0 793.0,425.0 797.0,430.0 793.0,436.0 787.0,434.0" fill="#d0d0d0" stroke="#101010" stroke-width="0.7" stroke-linejoin="round" />
<polygon points="795.0,434.0 801.0,431.0 805.0,436.0 800.0,442.0 795.0,440.0" fill="#d4d4d4" stroke="#101010" stroke-width="0.7" stroke-linejoin="round" />
<polygon points="862.0,294.0 868.0,290.0 873.0,294.0 868.0,303.0 861.0,300.0" fill="#cfcfcf" stroke="#101010" stroke-width="0.7" stroke-linejoin="round" />
<polygon points="872.0,301.0 878.0,297.0 882.0,302.0 876.0,312.0 870.0,309.0" fill="#d6d6d6" stroke="#101010" stroke-width="0.7" stroke-linejoin="round" />
<polygon points="852.0,305.0 860.0,300.0 866.0,303.0 856.0,326.0 848.0,322.0" fill="#7c7c7c" stroke="#101010" stroke-width="0.6" stroke-linejoin="round" />
<polygon points="866.0,306.0 874.0,309.0 864.0,332.0 857.0,328.0" fill="#6e6e6e" stroke="#101010" stroke-width="0.6" stroke-linejoin="round" />
<polygon points="822.0,381.0 827.0,378.0 830.0,383.0 826.0,388.0 821.0,386.0" fill="#d4d4d4" stroke="#101010" stroke-width="0.7" stroke-linejoin="round" />
<polygon points="818.0,388.0 824.0,390.0 820.0,398.0" fill="#555" stroke="#101010" stroke-width="0.6" stroke-linejoin="round" />
<ellipse cx="831.1" cy="368.2" rx="46.0" ry="4.6" transform="rotate(121.7 831.1 368.2)" fill="url(#gSilver)" stroke="#101010" stroke-width="0.8" />
<polygon points="855.2,329.0 870.1,338.2 821.8,416.5 806.9,407.3" fill="url(#gSilver)" stroke="none" stroke-width="1.15" stroke-linejoin="round" />
<polyline points="855.2,329.0 870.1,338.2" fill="none" stroke="#101010" stroke-width="1.15" stroke-linejoin="round" stroke-linecap="round" />
<polyline points="806.9,407.3 821.8,416.5" fill="none" stroke="#101010" stroke-width="1.15" stroke-linejoin="round" stroke-linecap="round" />
<ellipse cx="846.6" cy="375.4" rx="74.0" ry="7.4" transform="rotate(121.7 846.6 375.4)" fill="#a9a9a9" stroke="#101010" stroke-width="0.8" />
<polygon points="885.4,312.4 889.3,314.8 811.6,440.7 807.7,438.3" fill="#a9a9a9" stroke="none" stroke-width="1.15" stroke-linejoin="round" />
<polyline points="885.4,312.4 889.3,314.8" fill="none" stroke="#101010" stroke-width="1.15" stroke-linejoin="round" stroke-linecap="round" />
<polyline points="807.7,438.3 811.6,440.7" fill="none" stroke="#101010" stroke-width="1.15" stroke-linejoin="round" stroke-linecap="round" />
<ellipse cx="850.4" cy="377.7" rx="74.5" ry="7.5" transform="rotate(121.7 850.4 377.7)" fill="url(#gSilver)" stroke="#101010" stroke-width="0.8" />
<polygon points="889.5,314.3 904.4,323.5 826.2,450.3 811.3,441.1" fill="url(#gSilver)" stroke="none" stroke-width="1.15" stroke-linejoin="round" />
<polyline points="889.5,314.3 904.4,323.5" fill="none" stroke="#101010" stroke-width="1.15" stroke-linejoin="round" stroke-linecap="round" />
<polyline points="811.3,441.1 826.2,450.3" fill="none" stroke="#101010" stroke-width="1.15" stroke-linejoin="round" stroke-linecap="round" />
<path d="M889.5,314.3 A74.5,7.5 121.7 0 0 811.3,441.1" fill="none" stroke="#101010" stroke-width="1.15" stroke-linejoin="round" />
<polygon points="882.0,324.0 887.3,320.0 895.3,324.0 886.0,339.5 878.0,335.5" fill="#d2d2d2" stroke="#101010" stroke-width="0.8" stroke-linejoin="round" />
<polygon points="832.0,406.0 842.7,403.3 838.0,414.0 829.0,412.0" fill="#d8d8d8" stroke="#101010" stroke-width="0.8" stroke-linejoin="round" />
<polygon points="902.0,323.0 898.8,325.9 896.2,329.2 893.7,332.6 891.3,336.0 888.9,339.4 886.5,342.9 1013.1,418.5 1026.0,396.0" fill="#868686" stroke="none" stroke-width="1.15" stroke-linejoin="round" />
<polygon points="886.5,342.9 885.7,344.1 884.8,345.3 884.0,346.5 883.2,347.8 882.4,349.0 881.6,350.2 1008.5,426.5 1013.1,418.5" fill="#8f8f8f" stroke="none" stroke-width="1.15" stroke-linejoin="round" />
<polygon points="881.6,350.2 880.7,351.4 879.9,352.7 879.1,353.9 878.3,355.1 877.5,356.3 876.7,357.6 1004.0,434.4 1008.5,426.5" fill="#9b9b9b" stroke="none" stroke-width="1.15" stroke-linejoin="round" />
<polygon points="876.7,357.6 875.4,359.5 874.1,361.5 872.9,363.4 871.6,365.4 870.3,367.4 869.1,369.3 996.7,447.0 1004.0,434.4" fill="#8c8c8c" stroke="none" stroke-width="1.15" stroke-linejoin="round" />
<polygon points="869.1,369.3 868.5,370.3 867.9,371.2 867.3,372.1 866.7,373.1 866.1,374.0 865.5,374.9 993.3,453.0 996.7,447.0" fill="#b2b2b2" stroke="none" stroke-width="1.15" stroke-linejoin="round" />
<polygon points="865.5,374.9 864.6,376.4 863.7,377.8 862.8,379.3 861.8,380.7 860.9,382.2 860.0,383.7 988.0,462.2 993.3,453.0" fill="#cbcbcb" stroke="none" stroke-width="1.15" stroke-linejoin="round" />
<polygon points="860.0,383.7 853.6,394.1 847.2,404.6 840.9,415.2 834.8,425.8 828.9,436.6 824.0,448.0 950.0,528.5 988.0,462.2" fill="#c4c4c4" stroke="none" stroke-width="1.15" stroke-linejoin="round" />
<polyline points="900.4,324.1 1025.1,397.6" fill="none" stroke="#3e3e3e" stroke-width="1.0" stroke-linejoin="round" stroke-linecap="round" />
<polyline points="898.4,326.5 1023.5,400.4" fill="none" stroke="#3e3e3e" stroke-width="1.0" stroke-linejoin="round" stroke-linecap="round" />
<polyline points="896.4,328.9 1021.9,403.2" fill="none" stroke="#3e3e3e" stroke-width="1.0" stroke-linejoin="round" stroke-linecap="round" />
<polyline points="894.6,331.4 1020.3,405.9" fill="none" stroke="#3e3e3e" stroke-width="1.0" stroke-linejoin="round" stroke-linecap="round" />
<polyline points="892.8,333.9 1018.7,408.7" fill="none" stroke="#3e3e3e" stroke-width="1.0" stroke-linejoin="round" stroke-linecap="round" />
<polyline points="891.0,336.4 1017.1,411.5" fill="none" stroke="#3e3e3e" stroke-width="1.0" stroke-linejoin="round" stroke-linecap="round" />
<polyline points="889.2,339.0 1015.5,414.3" fill="none" stroke="#3e3e3e" stroke-width="1.0" stroke-linejoin="round" stroke-linecap="round" />
<polyline points="887.4,341.5 1013.9,417.1" fill="none" stroke="#3e3e3e" stroke-width="1.0" stroke-linejoin="round" stroke-linecap="round" />
<polyline points="886.5,342.9 1013.1,418.5" fill="none" stroke="#2c2c2c" stroke-width="1.3" stroke-linejoin="round" stroke-linecap="round" />
<polyline points="885.5,344.3 1012.2,420.1" fill="none" stroke="#6c6c6c" stroke-width="0.9" stroke-linejoin="round" stroke-linecap="round" />
<polyline points="881.6,350.2 1008.5,426.5" fill="none" stroke="#2c2c2c" stroke-width="1.3" stroke-linejoin="round" stroke-linecap="round" />
<polyline points="880.6,351.7 1007.6,428.1" fill="none" stroke="#6c6c6c" stroke-width="0.9" stroke-linejoin="round" stroke-linecap="round" />
<polyline points="876.7,357.6 1004.0,434.4" fill="none" stroke="#2c2c2c" stroke-width="1.3" stroke-linejoin="round" stroke-linecap="round" />
<polyline points="875.7,359.1 1003.0,436.0" fill="none" stroke="#6c6c6c" stroke-width="0.9" stroke-linejoin="round" stroke-linecap="round" />
<polyline points="869.1,369.3 996.7,447.0" fill="none" stroke="#2c2c2c" stroke-width="1.2" stroke-linejoin="round" stroke-linecap="round" />
<polyline points="865.5,374.9 993.3,453.0" fill="none" stroke="#555" stroke-width="1.0" stroke-linejoin="round" stroke-linecap="round" />
<polyline points="863.0,378.9 990.9,457.2" fill="none" stroke="#ffffff" stroke-width="1.5" stroke-linejoin="round" stroke-linecap="round" />
<polyline points="862.0,380.5 989.9,458.9" fill="none" stroke="#8a8a8a" stroke-width="0.8" stroke-linejoin="round" stroke-linecap="round" />
<polyline points="860.0,383.7 988.0,462.2" fill="none" stroke="#2e2e2e" stroke-width="1.6" stroke-linejoin="round" stroke-linecap="round" />
<polyline points="859.2,385.0 987.2,463.7" fill="none" stroke="#8c8c8c" stroke-width="0.9" stroke-linejoin="round" stroke-linecap="round" />
<polyline points="858.3,386.4 986.3,465.2" fill="none" stroke="#dedede" stroke-width="0.9" stroke-linejoin="round" stroke-linecap="round" />
<polyline points="856.7,389.0 984.8,467.9" fill="none" stroke="#2e2e2e" stroke-width="1.6" stroke-linejoin="round" stroke-linecap="round" />
<polyline points="855.9,390.4 983.9,469.3" fill="none" stroke="#8c8c8c" stroke-width="0.9" stroke-linejoin="round" stroke-linecap="round" />
<polyline points="855.0,391.7 983.1,470.8" fill="none" stroke="#dedede" stroke-width="0.9" stroke-linejoin="round" stroke-linecap="round" />
<polyline points="853.4,394.3 981.5,473.5" fill="none" stroke="#2e2e2e" stroke-width="1.6" stroke-linejoin="round" stroke-linecap="round" />
<polyline points="852.6,395.7 980.7,475.0" fill="none" stroke="#8c8c8c" stroke-width="0.9" stroke-linejoin="round" stroke-linecap="round" />
<polyline points="851.7,397.1 979.9,476.4" fill="none" stroke="#dedede" stroke-width="0.9" stroke-linejoin="round" stroke-linecap="round" />
<polyline points="850.2,399.7 978.3,479.1" fill="none" stroke="#2e2e2e" stroke-width="1.6" stroke-linejoin="round" stroke-linecap="round" />
<polyline points="849.3,401.0 977.5,480.6" fill="none" stroke="#8c8c8c" stroke-width="0.9" stroke-linejoin="round" stroke-linecap="round" />
<polyline points="848.5,402.4 976.6,482.1" fill="none" stroke="#dedede" stroke-width="0.9" stroke-linejoin="round" stroke-linecap="round" />
<polyline points="846.9,405.0 975.1,484.8" fill="none" stroke="#2e2e2e" stroke-width="1.6" stroke-linejoin="round" stroke-linecap="round" />
<polyline points="846.1,406.4 974.2,486.2" fill="none" stroke="#8c8c8c" stroke-width="0.9" stroke-linejoin="round" stroke-linecap="round" />
<polyline points="845.3,407.8 973.4,487.7" fill="none" stroke="#dedede" stroke-width="0.9" stroke-linejoin="round" stroke-linecap="round" />
<polyline points="843.7,410.4 971.9,490.4" fill="none" stroke="#2e2e2e" stroke-width="1.6" stroke-linejoin="round" stroke-linecap="round" />
<polyline points="842.9,411.8 971.0,491.9" fill="none" stroke="#8c8c8c" stroke-width="0.9" stroke-linejoin="round" stroke-linecap="round" />
<polyline points="842.1,413.2 970.2,493.3" fill="none" stroke="#dedede" stroke-width="0.9" stroke-linejoin="round" stroke-linecap="round" />
<polyline points="840.5,415.8 968.6,496.0" fill="none" stroke="#2e2e2e" stroke-width="1.6" stroke-linejoin="round" stroke-linecap="round" />
<polyline points="839.7,417.2 967.8,497.5" fill="none" stroke="#8c8c8c" stroke-width="0.9" stroke-linejoin="round" stroke-linecap="round" />
<polyline points="838.9,418.6 966.9,499.0" fill="none" stroke="#dedede" stroke-width="0.9" stroke-linejoin="round" stroke-linecap="round" />
<polyline points="837.4,421.2 965.4,501.7" fill="none" stroke="#2e2e2e" stroke-width="1.6" stroke-linejoin="round" stroke-linecap="round" />
<polyline points="836.6,422.6 964.6,503.1" fill="none" stroke="#8c8c8c" stroke-width="0.9" stroke-linejoin="round" stroke-linecap="round" />
<polyline points="835.8,424.0 963.7,504.6" fill="none" stroke="#dedede" stroke-width="0.9" stroke-linejoin="round" stroke-linecap="round" />
<polyline points="834.3,426.7 962.2,507.3" fill="none" stroke="#2e2e2e" stroke-width="1.6" stroke-linejoin="round" stroke-linecap="round" />
<polyline points="833.5,428.1 961.3,508.8" fill="none" stroke="#8c8c8c" stroke-width="0.9" stroke-linejoin="round" stroke-linecap="round" />
<polyline points="832.7,429.5 960.5,510.2" fill="none" stroke="#dedede" stroke-width="0.9" stroke-linejoin="round" stroke-linecap="round" />
<polyline points="831.2,432.1 958.9,512.9" fill="none" stroke="#2e2e2e" stroke-width="1.6" stroke-linejoin="round" stroke-linecap="round" />
<polyline points="830.5,433.6 958.1,514.4" fill="none" stroke="#8c8c8c" stroke-width="0.9" stroke-linejoin="round" stroke-linecap="round" />
<polyline points="829.7,435.0 957.3,515.8" fill="none" stroke="#dedede" stroke-width="0.9" stroke-linejoin="round" stroke-linecap="round" />
<polyline points="828.3,437.7 955.7,518.6" fill="none" stroke="#2e2e2e" stroke-width="1.6" stroke-linejoin="round" stroke-linecap="round" />
<polyline points="827.5,439.1 954.9,520.0" fill="none" stroke="#8c8c8c" stroke-width="0.9" stroke-linejoin="round" stroke-linecap="round" />
<polyline points="826.8,440.6 954.0,521.5" fill="none" stroke="#dedede" stroke-width="0.9" stroke-linejoin="round" stroke-linecap="round" />
<polyline points="825.5,443.3 952.5,524.2" fill="none" stroke="#2e2e2e" stroke-width="1.6" stroke-linejoin="round" stroke-linecap="round" />
<polyline points="824.8,444.8 951.6,525.7" fill="none" stroke="#8c8c8c" stroke-width="0.9" stroke-linejoin="round" stroke-linecap="round" />
<polyline points="824.2,446.3 950.8,527.1" fill="none" stroke="#dedede" stroke-width="0.9" stroke-linejoin="round" stroke-linecap="round" />
<polyline points="902.0,323.0 896.8,328.4 892.4,334.4 888.2,340.4 884.0,346.5 879.9,352.7 875.9,358.8 871.9,365.0 867.9,371.2 863.9,377.4 860.0,383.7 856.1,389.9 852.3,396.2 848.5,402.5 844.7,408.8 840.9,415.2 837.2,421.5 833.6,427.9 830.0,434.4 826.6,440.9 824.0,448.0" fill="none" stroke="#101010" stroke-width="0.8" stroke-linejoin="round" stroke-linecap="round" />
<polyline points="902.0,323.0 1026.0,396.0" fill="none" stroke="#101010" stroke-width="1.2" stroke-linejoin="round" stroke-linecap="round" />
<polyline points="824.0,448.0 950.0,528.5" fill="none" stroke="#101010" stroke-width="1.2" stroke-linejoin="round" stroke-linecap="round" />
<polygon points="917.0,330.0 928.0,332.5 925.0,342.0 914.0,338.0" fill="#a9a9a9" stroke="#101010" stroke-width="0.7" stroke-linejoin="round" />
<ellipse cx="923.0" cy="329.0" rx="6.2" ry="4.2" transform="rotate(15.0 923.0 329.0)" fill="#cfcfcf" stroke="#101010" stroke-width="0.7" />
<polygon points="891.5,358.0 902.5,360.5 899.5,370.0 888.5,366.0" fill="#a9a9a9" stroke="#101010" stroke-width="0.7" stroke-linejoin="round" />
<ellipse cx="897.5" cy="357.0" rx="6.2" ry="4.2" transform="rotate(15.0 897.5 357.0)" fill="#cfcfcf" stroke="#101010" stroke-width="0.7" />
<polygon points="1011.0,387.0 1022.0,389.5 1019.0,399.0 1008.0,395.0" fill="#a9a9a9" stroke="#101010" stroke-width="0.7" stroke-linejoin="round" />
<ellipse cx="1017.0" cy="386.0" rx="6.2" ry="4.2" transform="rotate(15.0 1017.0 386.0)" fill="#cfcfcf" stroke="#101010" stroke-width="0.7" />
<polygon points="986.0,415.0 997.0,417.5 994.0,427.0 983.0,423.0" fill="#a9a9a9" stroke="#101010" stroke-width="0.7" stroke-linejoin="round" />
<ellipse cx="992.0" cy="414.0" rx="6.2" ry="4.2" transform="rotate(15.0 992.0 414.0)" fill="#cfcfcf" stroke="#101010" stroke-width="0.7" />
<polygon points="816.0,474.0 827.0,450.0 888.0,488.5 886.0,504.0" fill="#c6c6c6" stroke="#101010" stroke-width="0.8" stroke-linejoin="round" />
<path d="M830,470 V458 A8,5 0 0 1 846,462 V478 Z" fill="#d9d9d9" stroke="#101010" stroke-width="0.7" stroke-linejoin="round" />
<ellipse cx="864.0" cy="447.0" rx="2.6" ry="1.8" transform="rotate(30.0 864.0 447.0)" fill="#9a9a9a" stroke="#101010" stroke-width="0.6" />
<ellipse cx="893.0" cy="463.0" rx="2.6" ry="1.8" transform="rotate(30.0 893.0 463.0)" fill="#9a9a9a" stroke="#101010" stroke-width="0.6" />
<polygon points="816.0,474.0 886.0,504.0 868.0,527.0 858.0,526.0 812.0,494.0" fill="#303030" stroke="#101010" stroke-width="1.15" stroke-linejoin="round" />
<polygon points="816.0,474.0 886.0,504.0 882.0,510.0 813.0,480.0" fill="#1e1e1e" stroke="none" stroke-width="1.15" stroke-linejoin="round" />
<circle cx="866.0" cy="488.0" r="10.0" fill="#2a2a2a" stroke="#101010" stroke-width="1.15" />
<polygon points="884.0,488.0 906.0,502.0 898.0,510.0 884.0,504.0" fill="#c8c8c8" stroke="#101010" stroke-width="0.8" stroke-linejoin="round" />
<circle cx="894.0" cy="497.0" r="3.2" fill="#fff" stroke="#101010" stroke-width="0.8" />
<path d="M1087.5,444.6 A67.5,10 121.3 0 0 1018.4,559.6 A67.5,10 121.3 0 0 1087.5,444.6 Z" fill="url(#gBlueEnd)" stroke="#101010" stroke-width="0.9" stroke-linejoin="round" />
<path d="M1080.5,427 L1087.5,444.6 A67.5,10 121.3 0 0 1018.4,559.6 L1001,559.6 A77,10 121.7 0 1 1080.5,427 Z" fill="url(#gBlueCh)" stroke="#101010" stroke-width="0.9" stroke-linejoin="round" />
<path d="M1025,396 L1080.5,427 A77,10 121.7 0 0 1001,559.6 L949,528 A76,7.5 121.7 0 1 1025,396 Z" fill="url(#gBlue)" stroke="#101010" stroke-width="1.0" stroke-linejoin="round" />
</svg>

<!-- window edge + shadow -->
<div class="abs" style="left:248px;top:0;width:10px;height:648px;background:linear-gradient(to right,rgba(0,0,0,0),rgba(0,0,0,0.10))"></div>
<div class="abs" style="left:258px;top:0;width:1px;height:648px;background:#2e83d6"></div>
<div class="abs" style="left:259px;top:0;width:1px;height:648px;background:rgba(46,131,214,0.25)"></div>

</body></html>
